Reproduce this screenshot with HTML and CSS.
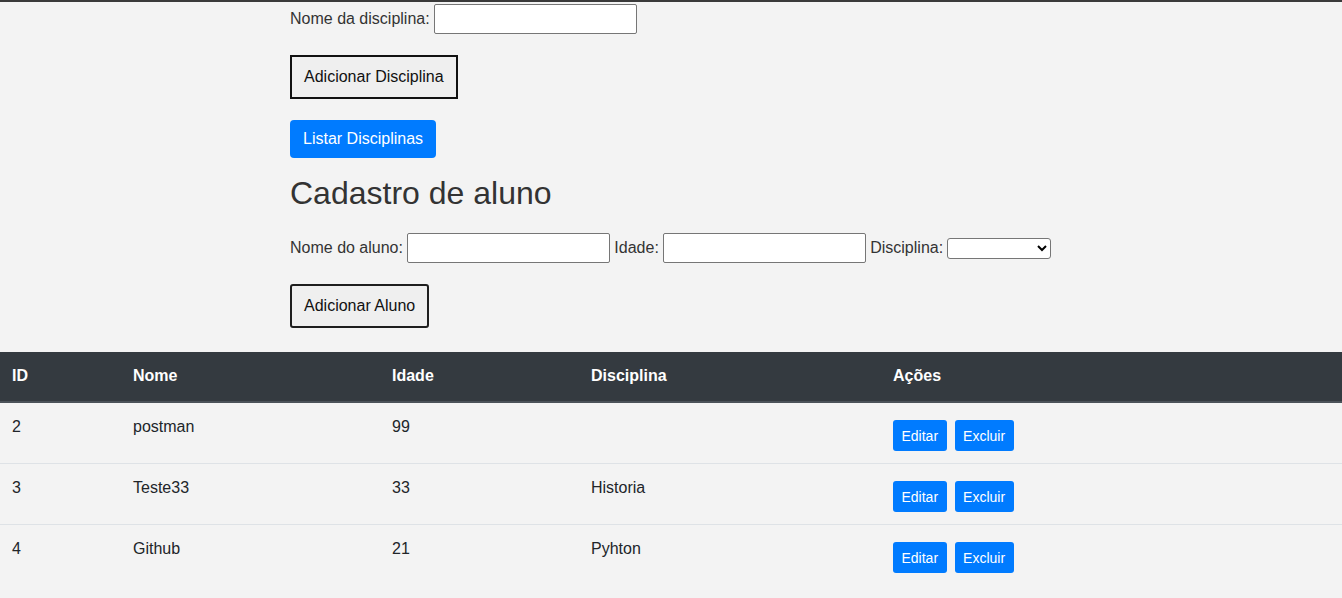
FILE: index.html
```html
<!DOCTYPE html>
<html lang="pt-BR">
<head>
<meta charset="utf-8">
<title>Cadastro</title>
<link rel="stylesheet" href="styles.css">
</head>
<body>
<div class="topbar"></div>
<div class="container">
  <div class="field-row first">
    <label class="lbl">Nome da disciplina:</label>
    <input class="txt" type="text">
  </div>
  <button class="btn-outline square">Adicionar Disciplina</button>
  <button class="btn-blue">Listar Disciplinas</button>
  <h2 class="title">Cadastro de aluno</h2>
  <div class="field-row">
    <label class="lbl">Nome do aluno:</label>
    <input class="txt" type="text">
    <label class="lbl">Idade:</label>
    <input class="txt" type="text">
    <label class="lbl">Disciplina:</label>
    <select class="sel"><option></option></select>
  </div>
  <button class="btn-outline rounded">Adicionar Aluno</button>
</div>
<table class="grid">
  <colgroup>
    <col class="c-id"><col class="c-nome"><col class="c-idade"><col class="c-disc"><col>
  </colgroup>
  <thead>
    <tr><th>ID</th><th>Nome</th><th>Idade</th><th>Disciplina</th><th>Ações</th></tr>
  </thead>
  <tbody>
    <tr><td>2</td><td>postman</td><td>99</td><td></td><td><div class="actions"><button class="btn-sm">Editar</button><button class="btn-sm">Excluir</button></div></td></tr>
    <tr><td>3</td><td>Teste33</td><td>33</td><td>Historia</td><td><div class="actions"><button class="btn-sm">Editar</button><button class="btn-sm">Excluir</button></div></td></tr>
    <tr><td>4</td><td>Github</td><td>21</td><td>Pyhton</td><td><div class="actions"><button class="btn-sm">Editar</button><button class="btn-sm">Excluir</button></div></td></tr>
  </tbody>
</table>
</body>
</html>
```
FILE: styles.css
```css
html, body {
  margin: 0;
  padding: 0;
}
body {
  background: #f3f3f3;
  font-family: "Liberation Sans", Arial, sans-serif;
  font-size: 16px;
  color: #333;
  overflow: hidden;
}
.topbar {
  height: 2px;
  background: #3a3a3a;
}
.container {
  padding-left: 290px;
  display: flex;
  flex-direction: column;
  align-items: flex-start;
}
.field-row {
  display: flex;
  align-items: center;
  gap: 4.2px;
  margin-top: 21px;
  height: 30px;
}
.field-row.first {
  margin-top: 2px;
}
.lbl {
  color: #333;
  line-height: 18px;
}
.txt {
  box-sizing: border-box;
  width: 203px;
  height: 30px;
  border: 1px solid #767676;
  border-radius: 2px;
  background: #fff;
  margin: 0;
  padding: 4px 6px;
  font-family: inherit;
  font-size: 16px;
}
.sel {
  box-sizing: border-box;
  width: 104px;
  height: 21px;
  border: 1px solid #767676;
  border-radius: 3px;
  background: #fff;
  margin: 0;
  font-family: inherit;
  font-size: 13px;
}
.btn-outline {
  margin-top: 21px;
  box-sizing: border-box;
  height: 44px;
  padding: 0 12px;
  border: 2px solid #111;
  background: #efefef;
  color: #111;
  font-family: inherit;
  font-size: 16px;
  line-height: 18px;
}
.btn-outline.square {
  border-radius: 0;
}
.btn-outline.rounded {
  border-radius: 3px;
  border-color: #1e1e1e;
}
.btn-blue {
  margin-top: 21px;
  box-sizing: border-box;
  height: 38px;
  padding: 0 13px;
  border: none;
  border-radius: 4px;
  background: #007bff;
  color: #fff;
  font-family: inherit;
  font-size: 16px;
  line-height: 18px;
}
.title {
  margin: 17px 0 0;
  font-size: 32px;
  font-weight: normal;
  line-height: 37px;
  color: #333;
}
.grid {
  margin-top: 24px;
  width: 100%;
  border-collapse: collapse;
  color: #212529;
}
.c-id { width: 121px; }
.c-nome { width: 259px; }
.c-idade { width: 199px; }
.c-disc { width: 302px; }
.grid th {
  background: #343a40;
  color: #fff;
  font-weight: bold;
  text-align: left;
  padding: 15px 12px 16px;
  line-height: 18px;
  border-bottom: 2px solid #4b5259;
}
.grid td {
  text-align: left;
  vertical-align: top;
  padding: 15px 12px 9px;
  line-height: 18px;
  border-top: 1px solid #dee2e6;
}
.grid tbody tr:first-child td {
  border-top: none;
}
.actions {
  display: flex;
  gap: 8px;
  margin-top: 2px;
  margin-bottom: 3px;
}
.btn-sm {
  box-sizing: border-box;
  height: 31px;
  padding: 0 8.5px;
  border: none;
  border-radius: 3px;
  background: #007bff;
  color: #fff;
  font-family: inherit;
  font-size: 14px;
  line-height: 16px;
}
```
